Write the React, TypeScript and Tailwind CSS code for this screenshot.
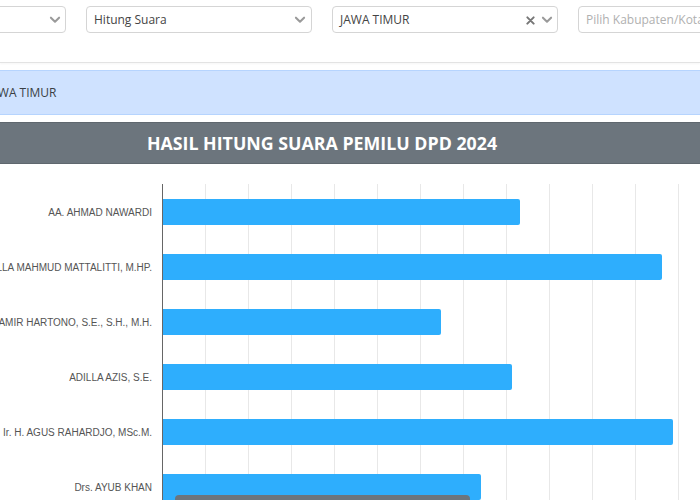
import React from "react";

const Chevron = () => (
  <svg width="14" height="14" viewBox="0 0 24 24" fill="none" stroke="#9a9a9a" strokeWidth="3.5" strokeLinecap="round" strokeLinejoin="round">
    <path d="M5 8l7 7 7-7" />
  </svg>
);

const Cross = () => (
  <svg width="9" height="9" viewBox="0 0 10 10" fill="none" stroke="#777" strokeWidth="2.2" strokeLinecap="round">
    <path d="M1.5 1.5l7 7M8.5 1.5l-7 7" />
  </svg>
);

const data = [
  { name: "AA. AHMAD NAWARDI", w: 357 },
  { name: "Dr. ABDULLA MAHMUD MATTALITTI, M.HP.", w: 499 },
  { name: "Dr. H. ADI SAMIR HARTONO, S.E., S.H., M.H.", w: 278 },
  { name: "ADILLA AZIS, S.E.", w: 349 },
  { name: "Ir. H. AGUS RAHARDJO, MSc.M.", w: 510 },
  { name: "Drs. AYUB KHAN", w: 318 },
];

export default function App() {
  return (
    <div className="w-[700px] h-[500px] overflow-hidden bg-white relative" style={{ fontFamily: "'Open Sans', sans-serif" }}>
      {/* selects */}
      <div className="h-[63px] border-b border-[#e3e3e3] shadow-[0_1px_2px_rgba(0,0,0,0.04)] pt-[6px]">
        <div className="flex gap-[20px] ml-[-160px]">
          <div className="w-[226px] h-[27px] shrink-0 border border-[#d5d5d5] rounded-[4px] flex items-center justify-end pr-[3px]">
            <Chevron />
          </div>
          <div className="w-[226px] h-[27px] shrink-0 border border-[#d5d5d5] rounded-[4px] flex items-center pl-[7px] pr-[4px] text-[12px] text-[#444]">
            <span className="flex-1">Hitung Suara</span>
            <Chevron />
          </div>
          <div className="w-[226px] h-[27px] shrink-0 border border-[#d5d5d5] rounded-[4px] flex items-center pl-[7px] pr-[3px] text-[12px] text-[#444]">
            <span className="flex-1">JAWA TIMUR</span>
            <span className="mr-[5px] mt-[2px] flex"><Cross /></span>
            <Chevron />
          </div>
          <div className="w-[226px] h-[27px] shrink-0 border border-[#d5d5d5] rounded-[4px] flex items-center pl-[7px] text-[12px] text-[#b0b0b0] whitespace-nowrap">
            Pilih Kabupaten/Kota
          </div>
        </div>
      </div>

      {/* banner */}
      <div className="mt-[7px] h-[45px] bg-[#cfe2ff] border-y border-[#b6d4fe] flex items-center">
        <span className="ml-[-13px] text-[12px] text-[#3a3f44]">JAWA TIMUR</span>
      </div>

      {/* header */}
      <div className="mt-[7px] h-[42px] bg-[#6c757d] border-y border-[#5f676e] flex items-center justify-center">
        <span className="text-white font-bold text-[17.8px] ml-[-56px]">HASIL HITUNG SUARA PEMILU DPD 2024</span>
      </div>

      {/* chart */}
      <div className="flex mt-[20px]">
        <div className="w-[162px] shrink-0" style={{ fontFamily: "'Liberation Sans', Arial, sans-serif" }}>
          {data.map((d) => (
            <div key={d.name} className="h-[55px] flex items-center justify-end pr-[10px] pt-[2px] text-[10px] text-[#555] whitespace-nowrap">
              {d.name}
            </div>
          ))}
        </div>
        <div className="relative flex-1 border-l border-[#666]">
          <div className="absolute inset-0 flex">
            {Array.from({ length: 12 }).map((_, i) => (
              <div key={i} className="w-[43px] shrink-0 border-r border-[#e8e8e8]" />
            ))}
          </div>
          <div className="relative">
            {data.map((d) => (
              <div key={d.name} className="h-[55px] flex items-center">
                <div className="h-[26px] bg-[#2eaefd] rounded-r-[2px]" style={{ width: d.w }} />
              </div>
            ))}
          </div>
        </div>
      </div>

      {/* tooltip */}
      <div className="absolute left-[175px] top-[495px] w-[295px] h-[20px] bg-[#6c757d] rounded-[4px]" />
    </div>
  );
}
